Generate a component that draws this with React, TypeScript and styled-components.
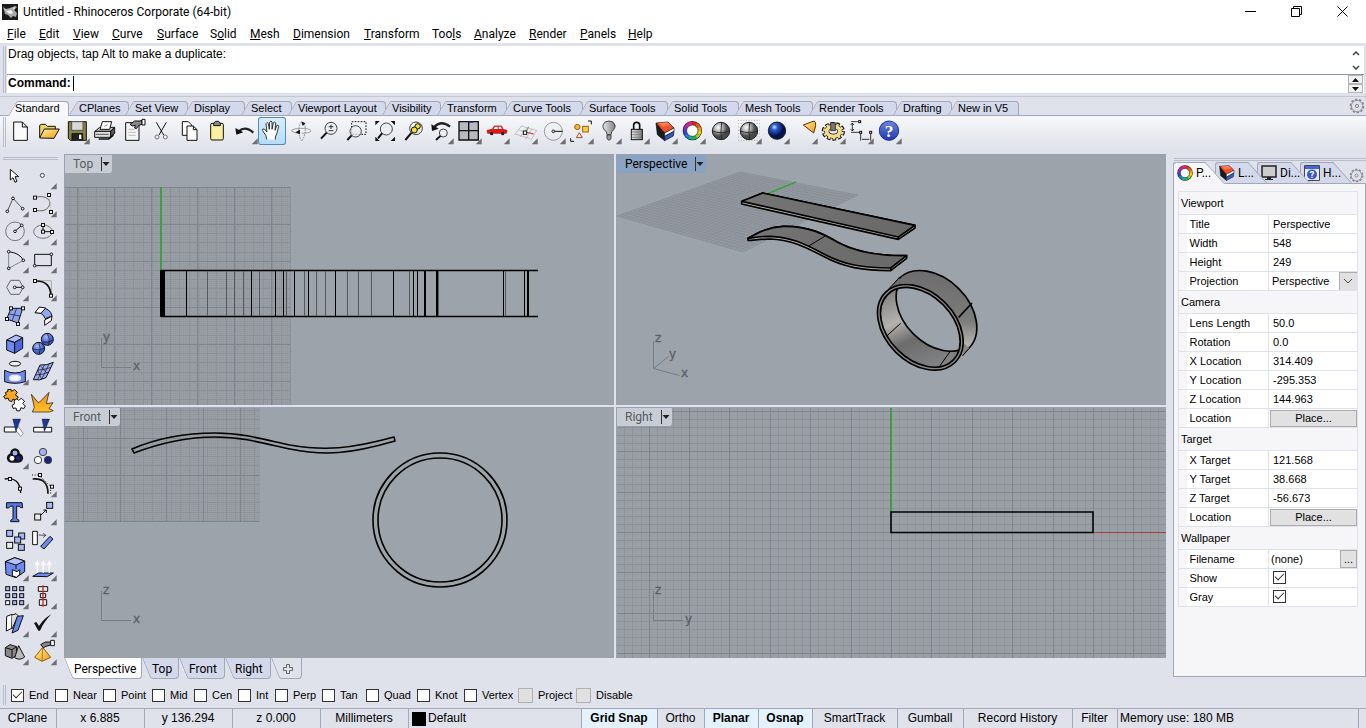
import React from "react";
import styled, { createGlobalStyle, css } from "styled-components";

const sans = '"Liberation Sans", Arial, sans-serif';
const ui = 'Roboto, "Open Sans", sans-serif';
const line = "#a2a7ba";
const chrome = "#dfe2ea";
const lilac = "#d3d8ea";

const Global = createGlobalStyle`
  *, *::before, *::after { box-sizing: border-box; }
  body { margin: 0; background: ${chrome}; color: #000; font: 11px/13px ${sans}; }
  button, input, select { font: inherit; color: inherit; margin: 0; padding: 0; border: 0; background: none; border-radius: 0; }
  svg { display: block; }
`;

/* ---------- frame ---------- */

const Frame = styled.div`
  display: flex;
  flex-direction: column;
  min-height: 100vh;
  overflow: hidden;
`;

const TitleBar = styled.header`
  display: flex;
  align-items: center;
  height: 24px;
  padding-left: 2px;
  background: #fff;
  font: 12px/16px ${ui};
`;

const Title = styled.h1`
  flex: 1;
  margin: 0 0 0 5px;
  font: inherit;
`;

const WindowButton = styled.button`
  display: grid;
  place-items: center;
  width: 46px;
  height: 20px;
  margin: 0 1px 2px -1px;
`;

const MenuBar = styled.nav`
  display: flex;
  height: 19px;
  padding-left: 7px;
  background: #fff;
  font: 12px/18px ${ui};
`;

const MenuItem = styled.button<{ $w: number }>`
  width: ${(p) => p.$w}px;
  text-align: left;
  white-space: nowrap;
`;

const CommandArea = styled.section`
  display: flex;
  height: 54px;
  padding: 3px 2px 3px 3px;
  border-bottom: 1px solid #c4c8d6;
`;

const Grip = styled.div`
  width: 3px;
  margin-right: 1px;
  border: solid #b9bdcb;
  border-width: 0 1px;
`;

const CommandBox = styled.div`
  flex: 1;
  background: #fff;
  font: 12px/16px ${sans};
`;

const History = styled.div`
  display: flex;
  justify-content: space-between;
  height: 29px;
  padding-left: 1px;
  border-bottom: 1px solid #8f98aa;
`;

const Prompt = styled.label`
  display: flex;
  height: 18px;
  padding-left: 1px;
  font-weight: bold;
`;

const CommandInput = styled.input`
  flex: 1;
  margin-left: 2px;
  border-left: 1px solid #000;
  height: 15px;
  margin-top: 1px;
  outline: none;
`;

const ScrollColumn = styled.div`
  display: flex;
  flex-direction: column;
  width: 16px;
`;

const ScrollButton = styled.button<{ $boxed?: boolean }>`
  display: grid;
  place-items: center;
  flex: 1;
  ${(p) => p.$boxed && css`background: #f2f2f2; border: 1px solid #b4b4b4; margin-right: 1px;`}
`;

/* ---------- toolbar ---------- */

const TabStrip = styled.div`
  display: flex;
  align-items: flex-end;
  height: 19px;
  padding-left: 8px;
  border-bottom: 1px solid ${line};
`;

const ToolTab = styled.button<{ $w: number; $active?: boolean }>`
  position: relative;
  isolation: isolate;
  width: ${(p) => p.$w}px;
  height: ${(p) => (p.$active ? 15 : 14)}px;
  margin-bottom: ${(p) => (p.$active ? -1 : 0)}px;
  padding-left: ${(p) => (p.$active ? 7 : 10)}px;
  text-align: left;
  white-space: nowrap;
  z-index: ${(p) => (p.$active ? 2 : "auto")};
  &::before,
  &::after {
    content: "";
    position: absolute;
    z-index: -1;
    top: 0;
    bottom: 0;
    background: ${(p) => (p.$active ? "#f8f8fb" : lilac)};
    border-top: 1px solid ${line};
  }
  &::before {
    left: 0;
    width: 50%;
    border-left: 1px solid ${line};
    border-top-left-radius: 2px;
    transform: skewX(-30deg);
    transform-origin: bottom;
  }
  &::after {
    left: 35%;
    right: ${(p) => (p.$active ? 0 : -4)}px;
    border-right: 1px solid ${line};
    border-top-right-radius: 4px;
  }
  &:last-of-type::after {
    right: 0;
  }
`;

const StripEnd = styled.button`
  margin: 0 1px 1px auto;
`;

const ToolRow = styled.div`
  display: flex;
  height: 34px;
  padding: 1px 0 0 3px;
  background: linear-gradient(#f7f8fa, ${chrome});
`;

const ToolButton = styled.button<{ $active?: boolean }>`
  flex: none;
  width: 28px;
  height: 28px;
  ${(p) => p.$active && css`
    background: linear-gradient(#d9eefb, #b2dcf8);
    box-shadow: inset 0 0 0 1px #5289b8;
    border-radius: 3px;
  `}
`;

const RowGrip = styled(Grip)`
  margin-right: 0;
  height: 30px;
`;

/* ---------- workspace ---------- */

const Workspace = styled.main`
  display: flex;
  flex: 1;
`;

const SideBar = styled.aside`
  width: 64px;
  padding: 7px 6px 0 1px;
`;

const SideGrip = styled.div`
  height: 3px;
  margin: 0 0 2px 2px;
  border: solid #b9bdcb;
  border-width: 1px 0;
`;

const SideGrid = styled.div`
  display: grid;
  grid-template-columns: 28px 28px;
`;

const ViewColumn = styled.div`
  display: flex;
  flex: 1;
  flex-direction: column;
  min-width: 0;
  padding-top: 4px;
`;

const Panes = styled.div`
  display: grid;
  flex: 1;
  grid-template: 1fr 1fr / 1fr 1fr;
  gap: 2px;
`;

const Pane = styled.section`
  position: relative;
  overflow: hidden;
  min-width: 0;
  background: #9da3aa;
  border: solid #9aa0b2;
  border-width: 1px 0 0 1px;
`;

const Scene = styled.svg`
  position: absolute;
  inset: 0;
  width: 100%;
  height: 100%;
`;

const PaneLabel = styled.button<{ $active?: boolean }>`
  position: absolute;
  top: 0;
  left: 0;
  display: flex;
  align-items: center;
  height: 18px;
  padding-left: 8px;
  border-bottom-right-radius: 3px;
  background: ${(p) => (p.$active ? "#8ba3c2" : "#c8cdd5")};
  color: ${(p) => (p.$active ? "#000" : "#555a60")};
  font: 12px/18px ${ui};
  svg {
    width: 11px;
    margin-left: 8px;
  }
`;

const ViewTabs = styled.div`
  display: flex;
  height: 22px;
`;

const ViewTab = styled.button<{ $w: number; $active?: boolean; $plain?: boolean }>`
  position: relative;
  isolation: isolate;
  width: ${(p) => p.$w}px;
  height: 21px;
  padding-left: 10px;
  text-align: left;
  font: 12px/20px ${ui};
  z-index: ${(p) => (p.$active ? 2 : "auto")};
  svg {
    margin-left: 2px;
  }
  &::before,
  &::after {
    content: "";
    position: absolute;
    z-index: -1;
    top: 0;
    bottom: 0;
    background: ${(p) => (p.$active ? "#fff" : p.$plain ? chrome : lilac)};
    border-bottom: 1px solid ${line};
  }
  &::before {
    left: 0;
    width: 50%;
    border-left: 1px solid ${line};
    border-bottom-left-radius: 3px;
    transform: skewX(22deg);
    transform-origin: top;
  }
  &::after {
    left: 35%;
    right: 0;
    border-right: 1px solid ${line};
    border-bottom-right-radius: 4px;
  }
`;

/* ---------- property panel ---------- */

const PanelColumn = styled.aside`
  display: flex;
  flex-direction: column;
  width: 200px;
  padding: 8px 0 3px 7px;
`;

const PanelGrip = styled(SideGrip)`
  margin: 0 0 1px 1px;
`;

const PanelTabs = styled.div`
  display: flex;
  height: 21px;
`;

const PanelTab = styled.button<{ $w: number; $z: number; $active?: boolean }>`
  position: relative;
  isolation: isolate;
  display: flex;
  align-items: center;
  gap: 3px;
  width: ${(p) => p.$w}px;
  height: ${(p) => (p.$active ? 22 : 21)}px;
  padding-left: 4px;
  z-index: ${(p) => p.$z};
  font: 12px/16px ${ui};
  white-space: nowrap;
  svg {
    flex: none;
  }
  &::before,
  &::after {
    content: "";
    position: absolute;
    z-index: -1;
    top: 0;
    bottom: 0;
    background: ${(p) => (p.$active ? "#f6f6f9" : lilac)};
    border-top: 1px solid ${line};
  }
  &::before {
    left: 0;
    width: 60%;
    border-left: 1px solid ${line};
    border-top-left-radius: 3px;
  }
  &::after {
    left: 55%;
    right: -10px;
    border-right: 1px solid ${line};
    transform: skewX(42deg);
    transform-origin: bottom;
  }
`;

const PanelEnd = styled.button`
  margin: 5px 2px 0 auto;
`;

const PanelBody = styled.div`
  flex: 1;
  padding: 7px 7px 0 4px;
  background: #f6f6f9;
  border: 1px solid ${line};
`;

const Properties = styled.table`
  width: 100%;
  border-collapse: collapse;
  table-layout: fixed;
  border: 1px solid ${chrome};
  td,
  th {
    padding: 0;
    font-weight: normal;
    text-align: left;
  }
`;

const GroupRow = styled.tr`
  height: 23px;
  th {
    padding-left: 2px;
    border-bottom: 1px solid ${chrome};
  }
`;

const PropRow = styled.tr`
  height: 19px;
  border-bottom: 1px solid ${chrome};
`;

const PropName = styled.th`
  background: #fff;
  border-right: 1px solid ${chrome};
  && {
    padding-left: 3px;
  }
`;

const PropValue = styled.td`
  background: #fff;
`;

const ValueInput = styled.input`
  display: block;
  width: 100%;
  height: 16px;
  padding-left: 4px;
`;

const PlaceButton = styled.button`
  display: block;
  width: calc(100% - 1px);
  height: 17px;
  margin-left: 1px;
  background: #e1e1e1;
  border: 1px solid #adadad;
`;

const SplitCell = styled.div`
  display: flex;
  height: 18px;
`;

const FileInput = styled(ValueInput)`
  height: 18px;
  padding-left: 2px;
`;

const PickerBox = styled.div`
  position: relative;
  svg {
    position: absolute;
    top: 0;
    right: 0;
    pointer-events: none;
  }
`;

const Picker = styled.select`
  display: block;
  appearance: none;
  width: 100%;
  height: 18px;
  padding-left: 3px;
`;

const BrowseButton = styled.button`
  flex: none;
  width: 17px;
  background: #e1e1e1;
  border: 1px solid #adadad;
  line-height: 13px;
`;

const Check = styled.input`
  appearance: none;
  display: grid;
  place-items: center;
  flex: none;
  width: 13px;
  height: 13px;
  background: #fff;
  border: 1px solid #333;
  &:checked::after {
    content: "";
    width: 9px;
    height: 5px;
    margin-top: -3px;
    border: solid #333;
    border-width: 0 0 1px 1px;
    transform: rotate(-45deg);
  }
  &:disabled {
    width: 15px;
    height: 15px;
    background: #e0e0e0;
    border-color: #b0b0b0;
  }
  ${PropValue} & {
    margin-left: 4px;
    margin-top: -2px;
  }
`;

/* ---------- bottom bars ---------- */

const SnapBar = styled.div`
  display: flex;
  align-items: center;
  height: 28px;
  padding: 2px 0 0 3px;
`;

const SnapGrip = styled(Grip)`
  height: 20px;
  margin-right: 5px;
`;

const SnapOption = styled.label<{ $w: number }>`
  display: flex;
  align-items: center;
  gap: 5px;
  width: ${(p) => p.$w}px;
  white-space: nowrap;
`;

const StatusBar = styled.footer`
  display: flex;
  height: 20px;
  border-top: 1px solid ${line};
  font: 12px/19px ${sans};
`;

const StatusCell = styled.button<{ $w: number; $on?: boolean; $left?: boolean }>`
  display: flex;
  align-items: center;
  justify-content: ${(p) => (p.$left ? "flex-start" : "center")};
  gap: 2px;
  width: ${(p) => p.$w}px;
  padding: 0 3px 0 2px;
  border-right: 1px solid ${line};
  background: ${(p) => (p.$on ? "#e3f2fc" : "transparent")};
  font-weight: ${(p) => (p.$on ? "bold" : "normal")};
  white-space: nowrap;
`;

const LayerSwatch = styled.span`
  width: 14px;
  height: 14px;
  margin-left: 1px;
  background: #000;
`;

/* ---------- icons: glyphs are drawn on shared sheets of 84-unit cells ---------- */

type Glyph = { x: number; y: number; name: string; art: React.ReactNode; corner?: boolean };

function Icon({ g }: { g: Glyph }) {
  return (
    <svg width="28" height="28" viewBox={`${g.x} ${g.y} 84 84`} fill="none" stroke="#111" strokeWidth="3" aria-hidden="true">
      {g.art}
      {g.corner && <path d={`M${g.x + 83} ${g.y + 64}v18h-18z`} fill="#6f6f73" stroke="none" />}
    </svg>
  );
}

const hues = ["#f0a000", "#f0d000", "#90d020", "#20b050", "#10b0a0", "#1080e0", "#3040d0", "#8030c0", "#d020b0", "#f02080", "#e02020", "#f05010"];

function ColorRing({ cx, cy, r, w }: { cx: number; cy: number; r: number; w: number }) {
  return (
    <g>
      <circle cx={cx} cy={cy} r={r} stroke="#222" strokeWidth={w + 4} />
      {hues.map((h, i) => (
        <circle key={h} cx={cx} cy={cy} r={r} stroke={h} strokeWidth={w} pathLength={12} strokeDasharray="1.05 10.95" transform={`rotate(${i * 30 - 30} ${cx} ${cy})`} />
      ))}
      <circle cx={cx} cy={cy} r={r - w / 2} fill="#fff" stroke="#333" strokeWidth="2" />
    </g>
  );
}

function Glass({ cx, cy, r, hx, hy }: { cx: number; cy: number; r: number; hx: number; hy: number }) {
  return (
    <>
      <circle cx={cx} cy={cy} r={r} fill="#ececf2" fillOpacity=".7" stroke="#444" />
      <path d={`M${cx - r * 0.72} ${cy + r * 0.72}L${hx} ${hy}`} strokeWidth="6" />
    </>
  );
}

function Layers({ x, y }: { x: number; y: number }) {
  return (
    <g transform={`translate(${x} ${y})`} strokeWidth="2" strokeLinejoin="round">
      <path d="M0 3L26 32V56L4 38z" fill="#1a1a1a" />
      <path d="M0 3L36 0 54 18 26 33z" fill="#f4512a" />
      <path d="M8 3L34 1 44 10 20 14z" fill="#ff7a4c" stroke="none" />
      <path d="M26 33L54 18V28L26 43z" fill="#fff" />
      <path d="M26 43L54 28 52 42 26 56z" fill="#2f5cc0" />
    </g>
  );
}

function Sphere({ cx, cy, fill, ink }: { cx: number; cy: number; fill: string; ink?: boolean }) {
  return (
    <>
      <circle cx={cx} cy={cy} r="26" fill={fill} stroke="#222" />
      {ink && <path d={`M${cx + 2} ${cy - 26}q-4 26 0 52M${cx - 26} ${cy}q26 10 52 0`} strokeWidth="2.5" stroke="#222" />}
    </>
  );
}

function Gear({ size }: { size: number }) {
  return (
    <svg width={size} height={size} viewBox="0 0 16 16" fill="none" stroke="#858589" aria-hidden="true">
      <circle cx="8" cy="8" r="6.6" strokeWidth="1.4" pathLength="20" strokeDasharray="1.2 .8" />
      <circle cx="8" cy="8" r="5.6" strokeWidth=".8" />
      <circle cx="8" cy="8" r="1.6" />
    </svg>
  );
}

const sheetA = (i: number) => ({ x: 18 + 84 * i, y: 351 });
const sheetB = (i: number) => ({ x: 84 * i - 972, y: 81 });
const sheetC = (i: number) => ({ x: 84 * i - 2022, y: 81 });

const sq = (x: number, y: number, s = 9, fill = "#fff") => <rect x={x - s / 2} y={y - s / 2} width={s} height={s} fill={fill} />;
const dot = (x: number, y: number) => <circle cx={x} cy={y} r="4" fill="#fff" />;

const toolbar: Glyph[] = [
  { ...sheetA(0), name: "New", art: <path d="M41 366h26l15 15v40H41zM67 366v15h15" fill="#fafafa" /> },
  { ...sheetA(1), name: "Open", art: <><path d="M119 412v-36l5-3h12l6 6h24v12" fill="#f0d060" /><path d="M119 414l14-27h45l-16 28z" fill="url(#gold)" /></> },
  { ...sheetA(2), name: "Save", corner: true, art: <><path d="M205 365h54v56h-48l-6-6z" fill="#8a8340" /><path d="M215 365h34v26h-34z" fill="#d8d8d8" stroke="#555" /><path d="M216 421v-20h32v20" fill="#222" /><path d="M237 404h7v13h-7z" fill="#fff" stroke="none" /></> },
  { ...sheetA(3), name: "Print", art: <><path d="M285 394l14-12h44l-12 12z" fill="#ccc" /><path d="M300 388l7-23h28l-6 23z" fill="#fff" /><path d="M284 394h48v18h-48z" fill="#e0e0e0" /><path d="M332 394l12-12v18l-12 12z" fill="#555" /><path d="M296 417h30l14-12" strokeWidth="5" /><path d="M288 403h38" stroke="#555" /><path d="M313 379l10-5" stroke="#888" /></> },
  { ...sheetA(4), name: "Document properties", art: <><path d="M377 368h40v53h-40z" fill="#f6f6f8" /><path d="M385 388h20M385 397h22M385 406h22" stroke="#bbb" /><path d="M390 373l14-10h16l6-2v12l-10 3-7 10-5-2 2-8-9 2z" fill="#888" /><path d="M426 358h9v17h-9z" fill="#fff" /></> },
  { ...sheetA(5), name: "Cut", art: <><path d="M469 367l22 38M499 367l-22 38" /><circle cx="471" cy="411" r="6" stroke="#777" /><circle cx="496" cy="411" r="6" stroke="#777" /></> },
  { ...sheetA(6), name: "Copy", art: <><path d="M547 365h18l9 9v32h-27z" fill="#fff" /><path d="M561 378h19l11 11v32h-30zM580 378v11h11" fill="#fff" /></> },
  { ...sheetA(7), name: "Paste", art: <><rect x="632" y="370" width="38" height="50" rx="4" fill="#fbf0a0" /><path d="M641 377v-8l6-5h8l6 5v8z" fill="#888" /></> },
  { ...sheetA(8), name: "Undo", corner: true, art: <><path d="M716 394q20-18 44 4" strokeWidth="7" stroke="#222" /><path d="M706 384l3 20 21-7z" fill="#111" stroke="none" /></> },
  { ...sheetA(9), name: "Pan", art: <path d="M800 418l-2-11-10-15q-2-7 5-5l8 9-3-25q3-7 7 0l3 17 1-22q4-6 7 0v22l4-20q4-5 7 1l-2 22 5-14q5-4 6 2l-5 20-5 12v8" fill="#fff" strokeWidth="2.5" /> },
  { ...sheetA(10), name: "Rotate view", art: <><path d="M895 400q-22-4-20-9 6-6 28-6 26 0 30 7 0 7-28 8" stroke="#777" strokeWidth="2" /><path d="M904 366q-16 24 0 56M906 422q14-22 8-50" stroke="#888" strokeDasharray="5 3" /><path d="M886 397l14-8v14zM904 364l12 6-8 8z" fill="#111" stroke="none" /></> },
  { ...sheetA(11), name: "Zoom", art: <><Glass cx={993} cy={385} r={18} hx={963} hy={416} /><path d="M986 380h14M993 374v13M986 392h14" strokeWidth="2.5" /></> },
  { ...sheetB(12), name: "Zoom window", art: <><path d="M65 95h43v38H65z" strokeDasharray="5 4" /><Glass cx={77} cy={124} r={17} hx={52} hy={150} /></> },
  { ...sheetB(13), name: "Zoom extents", art: <><Glass cx={169} cy={117} r={18} hx={144} hy={145} /><path d="M136 93h13l-13 13zM195 93h-13l13 13zM136 153h13l-13-13zM195 153h-13l13-13z" fill="#111" stroke="none" /></> },
  { ...sheetB(14), name: "Zoom selected", art: <><Glass cx={258} cy={115} r={19} hx={226} hy={150} /><circle cx="263" cy="109" r="8" fill="#f6e030" /><circle cx="253" cy="120" r="9" fill="#f6e030" /></> },
  { ...sheetB(15), name: "Undo view change", corner: true, art: <><path d="M314 110q20-20 46 0" strokeWidth="7" stroke="#222" /><path d="M304 103l2 20 20-7z" fill="#111" stroke="none" /><Glass cx={340} cy={129} r={12} hx={318} hy={150} /></> },
  { ...sheetB(16), name: "Four viewports", corner: true, art: <><path d="M387 95h58v55h-58z" fill="#b9b9c0" strokeWidth="4" /><path d="M416 95v55M387 122h58" strokeWidth="4" /><path d="M416 97h14" stroke="#2040c0" /></> },
  { ...sheetB(17), name: "Set view", corner: true, art: <><path d="M471 121l16-3 6-10h22l4 10 12 3-2 9h-56z" fill="#e01818" stroke="#a01010" strokeWidth="2" /><path d="M495 110h8v7h-12zM506 110h7l2 7h-9z" fill="#fff" stroke="none" /><circle cx="485" cy="131" r="5" fill="#222" stroke="none" /><circle cx="518" cy="131" r="5" fill="#222" stroke="none" /></> },
  { ...sheetB(18), name: "Set CPlane", corner: true, art: <><path d="M574 108l46 14M566 120l46 14M556 132l44 14M576 106l-22 28M592 112l-22 30M606 116l-20 32M620 121l-18 31" stroke="#aaa" strokeWidth="2" /><path d="M588 126l8-16" stroke="#30b040" /><path d="M588 127l22 4" stroke="#e03030" /><rect x="580" y="123" width="10" height="10" fill="#fff" /></> },
  { ...sheetB(19), name: "Circle", corner: true, art: <><circle cx="670" cy="124" r="27" stroke="#999" /><path d="M670 124h28" /><circle cx="670" cy="124" r="4" fill="#fff" /></> },
  { ...sheetB(20), name: "Select objects", corner: true, art: <><circle cx="742" cy="111" r="8" fill="#fbb430" stroke="#a06010" /><rect x="758" y="109" width="17" height="17" fill="#fbd040" stroke="#a06010" /><path d="M739 143l9-15 9 15z" stroke="#a05030" fill="#f8e8e0" /><path d="M774 93h10v10M722 145v9h10" /></> },
  { ...sheetB(21), name: "Hide objects", corner: true, art: <><path d="M831 134q0-9-8-15-6-8-4-14 4-12 18-12t18 12q2 6-4 14-8 6-8 15z" fill="url(#grey)" stroke="#444" /><path d="M831 135h12v11l-6 5-6-5z" fill="#999" stroke="#444" /></> },
  { ...sheetB(22), name: "Lock objects", corner: true, art: <><path d="M911 119v-14q0-8 9-8t9 8v14" strokeWidth="5" /><rect x="904" y="118" width="33" height="31" fill="url(#grey)" /><path d="M906 126h29M906 134h29M906 142h29" stroke="#666" strokeWidth="2" /></> },
  { ...sheetB(23), name: "Layers", corner: true, art: <Layers x={978} y={96} /> },
  { ...sheetC(24), name: "Color", corner: true, art: <ColorRing cx={37} cy={122} r={22} w={10} /> },
  { ...sheetC(25), name: "Shade", art: <Sphere cx={123} cy={123} fill="url(#ball)" ink /> },
  { ...sheetC(26), name: "Shade selected", corner: true, art: <><path d="M174 91h66M174 101h66M174 111h66M174 121h66M174 131h66M174 141h66M174 151h66" stroke="#aaa" strokeDasharray="3 5" /><Sphere cx={207} cy={123} fill="url(#ball)" ink /></> },
  { ...sheetC(27), name: "Render", corner: true, art: <Sphere cx={291} cy={122} fill="url(#blueball)" /> },
  { ...sheetC(28), name: "Spotlight", corner: true, art: <path d="M370 105l32-12q6 2 5 14l-6 22z" fill="url(#gold)" stroke="#603000" /> },
  { ...sheetC(29), name: "Options", corner: true, art: <><ellipse cx="460" cy="124" rx="28" ry="21" strokeWidth="14" pathLength="20" strokeDasharray="1.3 .7" /><ellipse cx="460" cy="124" rx="20" ry="15" strokeWidth="15" /><ellipse cx="460" cy="124" rx="27" ry="20" stroke="#f4dc8c" strokeWidth="9" pathLength="20" strokeDasharray=".9 1.1" strokeDashoffset="-.2" /><ellipse cx="460" cy="124" rx="20" ry="15" stroke="#f4dc8c" strokeWidth="11" /><path d="M452 98h14v24h-14z" fill="#777" strokeWidth="2" /></> },
  { ...sheetC(30), name: "Dimensions", corner: true, art: <><path d="M513 95h20M517 100v22M513 127h26M542 130v22M572 130v22M546 148h22M512 105l5-6 5 6M512 117l5 6 5-6" strokeWidth="2.5" />{sq(539, 95, 6)}{sq(542, 127, 6)}{sq(572, 127, 6)}</> },
  { ...sheetC(31), name: "Help", corner: true, art: <><circle cx="627" cy="122" r="29" fill="url(#help)" stroke="#1c2f9a" /><text x="627" y="140" textAnchor="middle" fontFamily="Liberation Serif, serif" fontWeight="bold" fontSize="52" fill="#fff" stroke="none">?</text></> },
];

const s1 = (r: number, c: number) => ({ x: 3 + 84 * c, y: 36 + 84 * r });
const s2 = (r: number, c: number) => ({ x: 3 + 84 * c, y: 84 * r - 729 });
const cell = (x: number, y: number, f = "#a9b8f4") => <rect x={x} y={y} width="18" height="18" fill={f} />;

const sideTools: Glyph[] = [
  { ...s1(0, 0), name: "Select", art: <path d="M31 58v32l8-7 6 14 6-3-6-14h11z" fill="#fff" /> },
  { ...s1(0, 1), name: "Point", corner: true, art: <circle cx="127" cy="76" r="6" fill="#fff" stroke="#444" /> },
  { ...s1(1, 0), name: "Polyline", corner: true, art: <><path d="M22 184l17-39 29 31" stroke="#555" />{dot(22, 184)}{dot(39, 145)}{dot(68, 176)}</> },
  { ...s1(1, 1), name: "Curve", corner: true, art: <><path d="M105 143q22-8 38 3 12 12 2 26-12 16-40 8" stroke="#666" /><path d="M147 135l6 50" stroke="#bbb" strokeDasharray="3 3" />{sq(105, 143)}{sq(105, 180)}{sq(147, 135)}{sq(153, 186)}</> },
  { ...s1(2, 0), name: "Circle", corner: true, art: <><circle cx="45" cy="244" r="28" stroke="#777" /><path d="M45 244l20-18" />{dot(45, 244)}{dot(65, 226)}</> },
  { ...s1(2, 1), name: "Ellipse", corner: true, art: <><ellipse cx="129" cy="245" rx="28" ry="20" stroke="#777" /><path d="M129 225v20h27" />{sq(129, 225)}{sq(129, 245)}{sq(156, 246)}</> },
  { ...s1(3, 0), name: "Arc", corner: true, art: <><path d="M26 305q34 4 44 26" /><path d="M26 305v50l44-24" stroke="#888" />{dot(26, 305)}{dot(70, 331)}{dot(26, 355)}</> },
  { ...s1(3, 1), name: "Rectangle", corner: true, art: <><path d="M104 313h50v34h-50z" />{dot(154, 313)}{dot(104, 347)}</> },
  { ...s1(4, 0), name: "Polygon", corner: true, art: <><path d="M32 391h26l12 21-12 21H32l-12-21z" stroke="#666" /><path d="M44 412h24" />{dot(44, 412)}{dot(68, 412)}</> },
  { ...s1(4, 1), name: "Fillet", corner: true, art: <><path d="M108 392h46v44" stroke="#aaa" /><path d="M105 393q46-2 48 44" strokeWidth="5" />{sq(105, 393)}{sq(153, 437)}</> },
  { ...s1(5, 0), name: "Surface from points", corner: true, art: <><path d="M33 475h35l-14 44-34-12z" fill="#8ba2f0" /><path d="M50 475l-14 38M27 492l34 6" strokeWidth="2" />{sq(33, 475)}{sq(69, 475)}{sq(21, 507)}{sq(54, 522)}</> },
  { ...s1(5, 1), name: "Sweep", corner: true, art: <><path d="M118 472q34 2 38 26l-20 8q-8-20-30-18z" fill="#92a8f4" /><path d="M118 471l-13 17 18 2 14-16zM156 498l-22 12v16l20-14z" fill="#fff" /></> },
  { ...s1(6, 0), name: "Box", corner: true, art: <><path d="M20 570l28-15 20 8-24 14z" fill="#aebcfa" /><path d="M20 570l24 8v32l-24-10z" fill="#7088f0" /><path d="M44 578l24-15v32l-24 15z" fill="#4a66da" /></> },
  { ...s1(6, 1), name: "Boolean union", corner: true, art: <><circle cx="142" cy="568" r="18" fill="url(#blueprint)" /><circle cx="116" cy="595" r="18" fill="url(#blueprint)" /><path d="M128 576q16 4 32-6M142 550q10 18 4 36M98 597q18 6 36-2M116 577q8 18 2 36" strokeWidth="2" /></> },
  { ...s1(7, 0), name: "Offset surface", corner: true, art: <><ellipse cx="45" cy="641" rx="17" ry="7" fill="#eee" /><path d="M14 661q31 16 62 0v34q-31 10-62 0z" fill="#6f88ee" /><ellipse cx="45" cy="684" rx="16" ry="8" fill="#fff" stroke="#e0e6ff" strokeWidth="5" /></> },
  { ...s1(7, 1), name: "Mesh", corner: true, art: <><path d="M120 645q20 2 40-8l-22 46q-20 10-38 6z" fill="#9db0f6" /><path d="M113 660q20 0 40-8M106 675q20 0 40-8M133 645l-20 44M147 642l-22 46M113 660l12 28M122 648l20 22" strokeWidth="2" /></> },
  { ...s1(8, 0), name: "Join", art: <><path d="M16 728l8-4-1-5 10-1 1 6 10-5 8 8-6 8 9 6-8 10-8-4-4 8-8-3-3-8-8 3-5-8 8-5z" fill="#f9a824" /><path d="M42 752l8-5 6 4 8-6 10 9-6 6 8 8-5 8-8-3-4 10-9-1-2-8-9 1-3-9 8-5z" fill="#fff" /></> },
  { ...s1(8, 1), name: "Explode", art: <path d="M94 733l21 25 4-2 28-29-8 34 20-3-12 18 13 6-12 4H97l6-14z" fill="url(#burst)" strokeWidth="2" /> },
  { ...s2(9, 0), name: "Trim", art: <><path d="M13 66h36v15H13z" fill="#fff" /><path d="M54 64l16 22-8 8-16-20z" fill="#fff" stroke="#666" strokeWidth="2" /><path d="M38 42h24L48 80z" fill="#1b3a8e" strokeWidth="1" /></> },
  { ...s2(9, 1), name: "Split", art: <><path d="M101 67h54v14h-54z" fill="#fff" /><path d="M126 42h23l-16 38z" fill="#1b3a8e" strokeWidth="1" /></> },
  { ...s2(10, 0), name: "Group", corner: true, art: <><path d="M45 132q12 2 12 14 10 4 10 14-3 14-22 10-20 4-22-10 0-10 10-14 0-12 12-14z" strokeWidth="5" fill="#111" /><circle cx="45" cy="144" r="9" fill="#a6aef6" /><circle cx="36" cy="160" r="9" fill="#fff" /><circle cx="55" cy="160" r="9" fill="#1c2080" /></> },
  { ...s2(10, 1), name: "Ungroup", art: <g stroke="#444"><circle cx="129" cy="141" r="11" fill="#aab0f4" /><circle cx="114" cy="165" r="11" fill="#fff" /><circle cx="144" cy="165" r="11" fill="#1c2080" /></g> },
  { ...s2(11, 0), name: "Edit points", art: <><path d="M14 222q46-8 48 42" strokeWidth="4" />{sq(30, 222)}{sq(60, 251)}</> },
  { ...s2(11, 1), name: "Control points", corner: true, art: <><path d="M98 222q46-4 46 44" strokeWidth="5" /><path d="M96 210h20l36 34v22" strokeDasharray="3 5" />{sq(120, 210)}{sq(156, 245)}</> },
  { ...s2(12, 0), name: "Text", art: <path d="M20 293h46l2 15h-6q-4-6-12-5v38l7 5v4H32v-4l7-5v-38q-10-1-13 6h-7z" fill="#5577e4" /> },
  { ...s2(12, 1), name: "Move", corner: true, art: <><path d="M118 335l20-20M130 315h9v9" />{cell(140, 292)}{cell(104, 327, "#e8ece4")}</> },
  { ...s2(13, 0), name: "Copy objects", art: <>{cell(20, 376)}{cell(56, 384)}{cell(44, 396)}{cell(20, 412, "#eee")}{cell(55, 418)}</> },
  { ...s2(13, 1), name: "Rotate", art: <><path d="M98 379h14v40H98z" fill="#fff" /><path d="M116 390l22 1M130 384l7 7-8 7" strokeWidth="2" /><path d="M150 394l9 8-27 30-10-8z" fill="#6c8cf0" /></> },
  { ...s2(14, 0), name: "Scale", corner: true, art: <><path d="M16 470l28-12 30 10v32l-26 18-30-10z" fill="#6e8aee" /><path d="M16 470l28-12 30 10-26 12z" fill="#b4c2fa" /><path d="M48 480v12" /><path d="M37 494l14 6 8-6v14l-10 9-12-5z" fill="#fff" /></> },
  { ...s2(14, 1), name: "Extrude", corner: true, art: <><path d="M98 514l18-10h44l-18 11z" fill="#6c8cf0" /><path d="M112 504v-30M130 504v-30M148 504v-30M106 480l6-10 6 10M124 480l6-10 6 10M142 480l6-10 6 10" stroke="#fff" strokeWidth="4" /></> },
  { ...s2(15, 0), name: "Array", corner: true, art: <>{[0, 1, 2].map((r) => [0, 1, 2].map((c) => <rect key={`${r}${c}`} x={17 + c * 21} y={545 + r * 21} width="12" height="12" fill={r === 2 && c === 0 ? "#fff" : "#a9b8f4"} />))}</> },
  { ...s2(15, 1), name: "Align", corner: true, art: <><path d="M115 545h28v14h-28zM121 566h16v12h-16zM118 584h22v17h-22z" fill="#eee" /><path d="M129 541v64" stroke="#d02020" strokeWidth="4" /></> },
  { ...s2(16, 0), name: "Bend", corner: true, art: <><path d="M20 634l16-6-1 42-16 8z" fill="#fff" /><path d="M36 630l12-4 6 6-18 40" fill="#ddd" /><path d="M52 634l18-2-16 44-18 8z" fill="#6687ea" /></> },
  { ...s2(16, 1), name: "Check", corner: true, art: <path d="M102 654l7-3 8 12q14-22 37-35-22 22-34 49h-5z" fill="#111" stroke="none" /> },
  { ...s2(17, 0), name: "Primitives", corner: true, art: <><path d="M16 728l14-9 20 6v26l-14 9-20-8z" fill="#888" /><path d="M16 728l20 6 14-9M36 734v24" /><path d="M56 722l18 34q-14 12-30 2z" fill="#bbb" /></> },
  { ...s2(17, 1), name: "Render properties", corner: true, art: <><path d="M128 727l24 30-26 12-22-12z" fill="url(#gold)" stroke="#9a5800" /><path d="M128 728l-2 40" stroke="#9a5800" strokeWidth="2" /><path d="M122 719l14-8h16v9l-14 4-8 4z" fill="#888" /><path d="M152 706h11v16h-11z" fill="#fff" /></> },
];

const Defs = styled.svg`
  position: absolute;
`;

function Paints() {
  return (
    <Defs width="0" height="0" aria-hidden="true">
      <defs>
        <linearGradient id="gold" x2="1" y2="1"><stop stopColor="#fff2a0" /><stop offset="1" stopColor="#ee9a10" /></linearGradient>
        <linearGradient id="burst" x2="0" y2="1"><stop stopColor="#f08a10" /><stop offset="1" stopColor="#ffc22c" /></linearGradient>
        <linearGradient id="grey" x2="1" y2="0"><stop stopColor="#e8e8e8" /><stop offset="1" stopColor="#808084" /></linearGradient>
        <linearGradient id="help" x2="0" y2="1"><stop stopColor="#6a86e6" /><stop offset="1" stopColor="#2236a8" /></linearGradient>
        <radialGradient id="ball" cx=".35" cy=".3"><stop stopColor="#fff" /><stop offset=".5" stopColor="#b0b0b0" /><stop offset="1" stopColor="#484848" /></radialGradient>
        <radialGradient id="blueprint" cx=".4" cy=".3"><stop stopColor="#a8bcff" /><stop offset="1" stopColor="#3c5cd0" /></radialGradient>
        <radialGradient id="blueball" cx=".35" cy=".3"><stop stopColor="#d0e4ff" /><stop offset=".35" stopColor="#2a5cd8" /><stop offset="1" stopColor="#06144e" /></radialGradient>
        <linearGradient id="plank" x2="1" y2="0"><stop stopColor="#757575" /><stop offset="1" stopColor="#686869" /></linearGradient>
        <linearGradient id="ringOut" gradientUnits="userSpaceOnUse" x1="900" y1="380" x2="1090" y2="600"><stop stopColor="#6c6c6e" /><stop offset=".5" stopColor="#7c7c7c" /><stop offset=".74" stopColor="#b4b2ae" /><stop offset=".9" stopColor="#8a8884" /></linearGradient>
        <linearGradient id="ringIn" gradientUnits="userSpaceOnUse" x1="850" y1="420" x2="960" y2="660"><stop stopColor="#858380" /><stop offset=".35" stopColor="#b4b2ae" /><stop offset=".6" stopColor="#6c6c6d" /><stop offset="1" stopColor="#828384" /></linearGradient>
        <pattern id="weave" width="2" height="2" patternUnits="userSpaceOnUse"><path d="M0 0h2v2H0z" fill="#989ea4" /><path d="M0 0h1v1H0z" fill="#90969c" /></pattern>
      </defs>
    </Defs>
  );
}

/* ---------- viewport scenes ---------- */

type GridProps = { x0: number; y0: number; x1: number; y1: number; ox: number; oy: number; step: number; fill?: string; majorX: number[]; majorY: number[] };

function CGrid({ x0, y0, x1, y1, ox, oy, step, fill = "url(#weave)", majorX, majorY }: GridProps) {
  const ticks = (from: number, to: number, o: number) => {
    const out: number[] = [];
    for (let v = o - Math.ceil((o - from) / step) * step; v <= to + 1; v += step) if (v >= from - 1) out.push(Math.round(v) + 0.5);
    return out;
  };
  return (
    <g>
      <rect x={x0} y={y0} width={x1 - x0 + 1} height={y1 - y0 + 1} fill={fill} />
      <path stroke="#8d9399" d={ticks(x0, x1, ox).map((x) => `M${x} ${y0}V${y1}`).join("") + ticks(y0, y1, oy).map((y) => `M${x0} ${y}H${x1}`).join("")} />
      <path stroke="#7f858c" d={majorX.map((x) => `M${x + 0.5} ${y0}V${y1}`).join("") + majorY.map((y) => `M${x0} ${y + 0.5}H${x1}`).join("")} />
    </g>
  );
}

function Gnomon({ up, right }: { up: string; right: string }) {
  return (
    <g fontFamily="DejaVu Sans, sans-serif" fontSize="12" fill="#5d6064" stroke="#5d6064" strokeWidth=".3">
      <path d="M36.5 183V212.5H66" fill="none" stroke="#787d83" strokeWidth="1" />
      <text x="38" y="186">{up}</text>
      <text x="68" y="215">{right}</text>
    </g>
  );
}

const bars = (xs: number[]) => xs.map((x) => `M${x + 0.5} 116v45`).join("");

function TopScene() {
  return (
    <Scene>
      <CGrid x0={0} y0={32} x1={225} y1={250} ox={96} oy={115} step={9.23} majorX={[12, 49, 86, 132, 169, 206]} majorY={[32, 69, 106, 152, 189, 226]} />
      <path d="M96 32v83" stroke="#3f9e3f" strokeWidth="2" />
      <g stroke="#000">
        <path d="M96 115.5h377M96 161.5h377" strokeWidth="1.6" />
        <path d="M97.5 115v47" strokeWidth="5" />
        <path d={bars([121, 186, 210, 218, 229, 243, 270, 328, 348, 352, 438, 459])} />
        <path d={bars([142, 161, 169, 178, 194, 221, 239, 251, 260, 282, 293, 306, 344, 373, 440])} stroke="#55585c" />
        <path d="M360 116v45M372 116v45M463 116v45" strokeWidth="2" />
      </g>
      <Gnomon up="y" right="x" />
    </Scene>
  );
}

function PerspectiveScene() {
  const A = [0, 61], B = [123, 17], C = [241, 30 + 10], D = [126, 97];
  const mix = (p: number[], q: number[], t: number) => `${p[0] + (q[0] - p[0]) * t} ${p[1] + (q[1] - p[1]) * t}`;
  const n = 30;
  let mesh = "";
  for (let i = 0; i <= n; i++) mesh += `M${mix(A, B, i / n)}L${mix(D, C, i / n)}M${mix(A, D, i / n)}L${mix(B, C, i / n)}`;
  return (
    <Scene>
      <path d={`M${A}L${B}L${C}L${D}z`} fill="#8f959c" fillOpacity=".6" />
      <path d={mesh} stroke="#848a91" strokeWidth=".5" fill="none" />
      <path d="M150 39l29-12" stroke="#3f9e3f" strokeWidth="1.5" />
      <g transform="scale(.33333) translate(-21 -15)" stroke="#000" strokeWidth="5" strokeLinejoin="round">
        <path d="M395 155l63-26 457 97v8l-50 34-470-106z" fill="#b4b0a8" />
        <path d="M395 154l63-25 457 97-50 35z" fill="url(#plank)" />
        <path d="M865 261v6" />
        <path d="M414 265c36-20 60-33 106-36 80-2 130 29 160 46 60 33 130 43 210 42v8l-48 37c-82 0-142-10-202-43-60-32-100-50-160-52-30 0-50 4-66 4z" fill="#b4b0a8" />
        <path d="M414 265c36-20 60-33 106-36 80-2 130 29 160 46 60 33 130 43 210 42l-48 37c-82 0-142-10-202-43-60-32-100-50-160-52-30 0-50 4-66 6z" fill="url(#plank)" />
        <path d="M596 288l50-30" strokeWidth="3" />
        <path d="M842 354v8" />
        <ellipse cx="972" cy="490" rx="148" ry="105" transform="rotate(45 972 490)" fill="url(#ringOut)" />
        <path d="M826 427l41-42 210 210-41 42z" fill="url(#ringOut)" stroke="none" />
        <path d="M824 430l43-46M1077 596l-20 22" strokeWidth="3" />
        <path d="M1046 502l40-43" />
        <ellipse cx="931" cy="532" rx="148" ry="105" transform="rotate(45 931 532)" fill="#8c8b88" />
        <clipPath id="bore"><ellipse cx="931" cy="532" rx="139" ry="96" transform="rotate(45 931 532)" /></clipPath>
        <g clipPath="url(#bore)">
          <path d="M780 380h320v320H780z" fill="url(#ringIn)" stroke="none" />
          <ellipse cx="978" cy="484" rx="139" ry="96" transform="rotate(45 978 484)" fill="#9da3aa" />
          <path d="M828 560l44-40M988 650l34-48" strokeWidth="3" />
        </g>
        <ellipse cx="931" cy="532" rx="139" ry="96" transform="rotate(45 931 532)" fill="none" />
      </g>
      <path d="M36.5 186v27.5l26 7M36.5 213.5l15-12" stroke="#787d83" fill="none" />
      <g fontFamily="DejaVu Sans, sans-serif" fontSize="12" fill="#5d6064" stroke="#5d6064" strokeWidth=".3">
        <text x="38" y="187">z</text>
        <text x="52" y="203">y</text>
        <text x="64" y="222">x</text>
      </g>
    </Scene>
  );
}

function FrontScene() {
  return (
    <Scene>
      <CGrid x0={0} y0={0} x1={194} y1={113} ox={4} oy={2} step={9.23} majorX={[18, 55, 101, 138, 175]} majorY={[30, 67, 113]} />
      <g stroke="#000" strokeWidth="1.6" fill="none" strokeLinejoin="round">
        <path d="M67 41C95 29 125 25 150 25 180 25 205 33 225 37 260 43 285 41 329 29L330 33C285 46 260 48 225 41 205 37 180 29 150 29 125 29 98 34 69 45z" />
        <circle cx="375" cy="112" r="67" />
        <circle cx="375" cy="112" r="62" />
      </g>
      <Gnomon up="z" right="x" />
    </Scene>
  );
}

function RightScene() {
  const major = (o: number, from: number, to: number) => Array.from({ length: to - from + 1 }, (_, i) => Math.round(o + (from + i) * 40.4));
  return (
    <Scene>
      <CGrid x0={0} y0={0} x1={560} y1={260} ox={274} oy={124} step={8.08} fill="#9a9fa6" majorX={major(274, -6, 6)} majorY={major(124, -3, 3)} />
      <path d="M274 0v104" stroke="#3f9e3f" strokeWidth="2" />
      <path d="M476 124.5h90" stroke="#a04040" />
      <path d="M274 104h202v20.500h-202z" fill="none" stroke="#000" strokeWidth="1.6" />
      <Gnomon up="z" right="y" />
    </Scene>
  );
}

function ViewPane({ name, active, children }: { name: string; active?: boolean; children: React.ReactNode }) {
  return (
    <Pane>
      {children}
      <PaneLabel $active={active}>
        {name}
        <svg height="18" viewBox="0 0 11 18" aria-hidden="true"><path d="M.5 2v14" stroke="#333" /><path d="M1.500 7h7l-3.500 4z" fill="#222" /></svg>
      </PaneLabel>
    </Pane>
  );
}

/* ---------- data ---------- */

const menus: [string, number, number][] = [
  ["File", 0, 32], ["Edit", 0, 34], ["View", 0, 39], ["Curve", 0, 45], ["Surface", 0, 53], ["Solid", 1, 40], ["Mesh", 0, 43],
  ["Dimension", 0, 71], ["Transform", 0, 68], ["Tools", 3, 42], ["Analyze", 0, 55], ["Render", 0, 51], ["Panels", 0, 48], ["Help", 0, 40],
];

const toolTabs: [string, number][] = [
  ["Standard", 61], ["CPlanes", 56], ["Set View", 59], ["Display", 57], ["Select", 47], ["Viewport Layout", 94], ["Visibility", 55],
  ["Transform", 66], ["Curve Tools", 76], ["Surface Tools", 85], ["Solid Tools", 71], ["Mesh Tools", 74], ["Render Tools", 84], ["Drafting", 55], ["New in V5", 71],
];

const snaps: [string, number][] = [
  ["End", 44], ["Near", 48], ["Point", 49], ["Mid", 42], ["Cen", 44], ["Int", 37], ["Perp", 47], ["Tan", 44], ["Quad", 51], ["Knot", 47], ["Vertex", 54], ["Project", 58], ["Disable", 60],
];

const statusCells: [string, number, boolean?][] = [
  ["CPlane", 57], ["x 6.885", 88], ["y 136.294", 88], ["z 0.000", 88], ["Millimeters", 88], ["Default", 173], ["Grid Snap", 76, true], ["Ortho", 47],
  ["Planar", 54, true], ["Osnap", 54, true], ["SmartTrack", 85], ["Gumball", 66], ["Record History", 109], ["Filter", 45], ["Memory use: 180 MB", 241],
];

const groups: [string, [string, string][]][] = [
  ["Viewport", [["Title", "Perspective"], ["Width", "548"], ["Height", "249"], ["Projection", "select"]]],
  ["Camera", [["Lens Length", "50.0"], ["Rotation", "0.0"], ["X Location", "314.409"], ["Y Location", "-295.353"], ["Z Location", "144.963"], ["Location", "place"]]],
  ["Target", [["X Target", "121.568"], ["Y Target", "38.668"], ["Z Target", "-56.673"], ["Location", "place"]]],
  ["Wallpaper", [["Filename", "file"], ["Show", "check"], ["Gray", "check"]]],
];

function Value({ name, value }: { name: string; value: string }) {
  if (value === "place") return <PlaceButton>Place...</PlaceButton>;
  if (value === "check") return <Check type="checkbox" defaultChecked aria-label={name} />;
  if (value === "file")
    return (
      <SplitCell>
        <FileInput defaultValue="(none)" aria-label={name} />
        <BrowseButton aria-label="Browse">...</BrowseButton>
      </SplitCell>
    );
  if (value === "select")
    return (
      <PickerBox>
        <Picker aria-label={name}><option>Perspective</option><option>Parallel</option></Picker>
        <svg width="18" height="18" viewBox="0 0 18 18" aria-hidden="true"><path d="M0 0h18v18H0z" fill="#e1e1e1" /><path d="M.5 18V.5H18" fill="none" stroke="#adadad" /><path d="M5 7l4 4 4-4" fill="none" stroke="#444" /></svg>
      </PickerBox>
    );
  return <ValueInput defaultValue={value} aria-label={name} />;
}

const Chevron = ({ down }: { down?: boolean }) => (
  <svg width="8" height="5" viewBox="0 0 8 5" fill="none" stroke="#444" strokeWidth="1.5" aria-hidden="true">
    <path d={down ? "M1 1l3 3 3-3" : "M1 4l3-3 3 3"} />
  </svg>
);

const Wedge = ({ down }: { down?: boolean }) => (
  <svg width="7" height="4" viewBox="0 0 7 4" fill="#111" aria-hidden="true">
    <path d={down ? "M0 0h7L3.500 4z" : "M0 4h7L3.500 0z"} />
  </svg>
);

export default function App() {
  return (
    <Frame>
      <Global />
      <Paints />
      <TitleBar>
        <svg width="16" height="16" viewBox="0 0 16 16" aria-hidden="true">
          <path d="M0 0h16v16H0z" fill="#1a1a1a" />
          <path d="M1 3l3 2 4-1 5-2 2 1-3 3 3 3-1 4-3-1-2 2-3-3-3-1-1-4z" fill="#aaa" />
          <path d="M2 4l3 3 4-1 2 3-3 1-3-2zM11 4l2-1-1 3z" fill="#f4f4f4" />
        </svg>
        <Title>Untitled - Rhinoceros Corporate (64-bit)</Title>
        <WindowButton aria-label="Minimize"><svg width="11" height="11"><path d="M0 5.5h11" stroke="#000" /></svg></WindowButton>
        <WindowButton aria-label="Restore"><svg width="11" height="11" fill="none" stroke="#000"><path d="M.5 2.5h8v8h-8zM2.5 2.5v-2h8v8h-2" /></svg></WindowButton>
        <WindowButton aria-label="Close"><svg width="11" height="11" stroke="#000"><path d="M.5.5l10 10M10.5.5l-10 10" /></svg></WindowButton>
      </TitleBar>
      <MenuBar>
        {menus.map(([m, u, w]) => (
          <MenuItem key={m} $w={w}>{m.slice(0, u)}<u>{m[u]}</u>{m.slice(u + 1)}</MenuItem>
        ))}
      </MenuBar>
      <CommandArea>
        <Grip />
        <CommandBox>
          <History>
            <span>Drag objects, tap Alt to make a duplicate:</span>
            <ScrollColumn>
              <ScrollButton aria-label="Scroll up"><Chevron /></ScrollButton>
              <ScrollButton aria-label="Scroll down"><Chevron down /></ScrollButton>
            </ScrollColumn>
          </History>
          <Prompt>
            Command:
            <CommandInput />
            <ScrollColumn>
              <ScrollButton $boxed aria-label="Previous command"><Wedge /></ScrollButton>
              <ScrollButton $boxed aria-label="Next command"><Wedge down /></ScrollButton>
            </ScrollColumn>
          </Prompt>
        </CommandBox>
      </CommandArea>
      <TabStrip>
        {toolTabs.map(([t, w], i) => <ToolTab key={t} $w={w} $active={i === 0}>{t}</ToolTab>)}
        <StripEnd as="span"><Gear size={16} /></StripEnd>
      </TabStrip>
      <ToolRow>
        <RowGrip />
        {toolbar.map((g) => <ToolButton key={g.name} $active={g.name === "Pan"} aria-label={g.name}><Icon g={g} /></ToolButton>)}
      </ToolRow>
      <Workspace>
        <SideBar>
          <SideGrip />
          <SideGrid>
            {sideTools.map((g) => <ToolButton key={g.name} aria-label={g.name}><Icon g={g} /></ToolButton>)}
          </SideGrid>
        </SideBar>
        <ViewColumn>
          <Panes>
            <ViewPane name="Top"><TopScene /></ViewPane>
            <ViewPane name="Perspective" active><PerspectiveScene /></ViewPane>
            <ViewPane name="Front"><FrontScene /></ViewPane>
            <ViewPane name="Right"><RightScene /></ViewPane>
          </Panes>
          <ViewTabs>
            <ViewTab $w={78} $active>Perspective</ViewTab>
            <ViewTab $w={37}>Top</ViewTab>
            <ViewTab $w={46}>Front</ViewTab>
            <ViewTab $w={46}>Right</ViewTab>
            <ViewTab $w={31} $plain aria-label="Add view">
              <svg width="10" height="10" fill="none" stroke="#666"><path d="M3.5.5h3v3h3v3h-3v3h-3v-3h-3v-3h3z" /></svg>
            </ViewTab>
          </ViewTabs>
        </ViewColumn>
        <PanelColumn>
          <PanelGrip />
          <PanelTabs>
            <PanelTab $w={42} $z={4} $active>
              <svg width="16" height="16" viewBox="7 92 60 60" fill="none"><ColorRing cx={37} cy={122} r={22} w={10} /></svg>P...
            </PanelTab>
            <PanelTab $w={42} $z={3}>
              <svg width="16" height="16" viewBox="-2 -2 60 60" fill="none" stroke="#222"><Layers x={0} y={0} /></svg>L...
            </PanelTab>
            <PanelTab $w={43} $z={2}>
              <svg width="16" height="16" viewBox="0 0 16 16"><rect x="1" y="1" width="14" height="11" fill="#ccc" stroke="#222" strokeWidth="1.5" /><path d="M6 12h4v2h2v1H4v-1h2z" fill="#222" /></svg>Di...
            </PanelTab>
            <PanelTab $w={42} $z={1}>
              <svg width="16" height="16" viewBox="0 0 16 16"><path d="M.5.5h15v15H.5z" fill="#e8ecfa" stroke="#445" /><path d="M1 1h14v3H1z" fill="#4468d0" /><circle cx="8" cy="9.5" r="5" fill="#3a58cc" /><text x="8" y="13" fontSize="9" fontWeight="bold" textAnchor="middle" fill="#fff">?</text></svg>H...
            </PanelTab>
            <PanelEnd aria-label="Panel options"><Gear size={15} /></PanelEnd>
          </PanelTabs>
          <PanelBody>
            <Properties>
              <colgroup><col width="8" /><col width="82" /><col /></colgroup>
              {groups.map(([title, rows]) => (
                <tbody key={title}>
                  <GroupRow><th colSpan={3} scope="rowgroup">{title}</th></GroupRow>
                  {rows.map(([name, value]) => (
                    <PropRow key={name}>
                      <td />
                      <PropName scope="row">{name}</PropName>
                      <PropValue><Value name={name} value={value} /></PropValue>
                    </PropRow>
                  ))}
                </tbody>
              ))}
            </Properties>
          </PanelBody>
        </PanelColumn>
      </Workspace>
      <SnapBar>
        <SnapGrip />
        {snaps.map(([s, w], i) => (
          <SnapOption key={s} $w={w}><Check type="checkbox" defaultChecked={i === 0} disabled={i > 10} />{s}</SnapOption>
        ))}
      </SnapBar>
      <StatusBar>
        {statusCells.map(([s, w, on]) => (
          <StatusCell key={s} $w={w} $on={on} $left={s === "Default" || s.startsWith("Memory")}>
            {s === "Default" && <LayerSwatch />}{s}
          </StatusCell>
        ))}
      </StatusBar>
    </Frame>
  );
}
